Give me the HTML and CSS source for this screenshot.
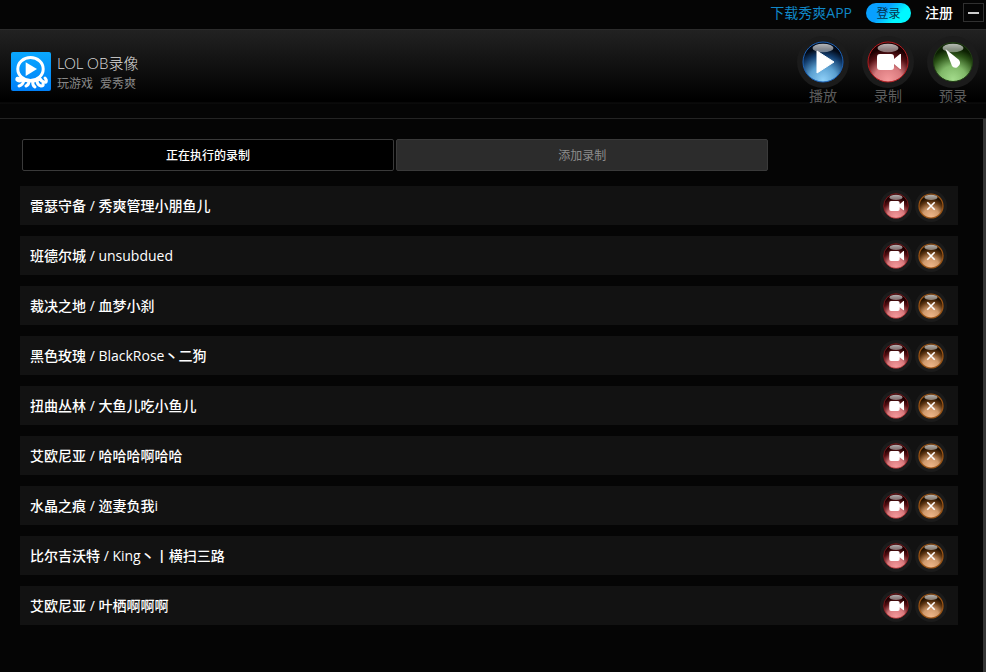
FILE: index.html
```html
<!DOCTYPE html>
<html lang="zh-CN">
<head>
<meta charset="utf-8">
<title>LOL OB录像</title>
<link rel="stylesheet" href="styles.css">
</head>
<body>
<svg class="defs" aria-hidden="true">
  <defs>
    <radialGradient id="blue" cx=".5" cy=".95" r=".92"><stop offset="0" stop-color="#8fd0f8"/><stop offset=".38" stop-color="#5a9fd0"/><stop offset=".68" stop-color="#123c6c"/><stop offset=".86" stop-color="#020a18"/></radialGradient>
    <radialGradient id="red" cx=".5" cy=".95" r=".92"><stop offset="0" stop-color="#f59a9c"/><stop offset=".38" stop-color="#d87a7e"/><stop offset=".68" stop-color="#541014"/><stop offset=".86" stop-color="#1c0002"/></radialGradient>
    <radialGradient id="green" cx=".5" cy=".95" r=".92"><stop offset="0" stop-color="#a4dc8c"/><stop offset=".38" stop-color="#80b868"/><stop offset=".68" stop-color="#2c5418"/><stop offset=".86" stop-color="#0c2002"/></radialGradient>
    <radialGradient id="orange" cx=".5" cy=".95" r=".92"><stop offset="0" stop-color="#f0b88c"/><stop offset=".38" stop-color="#d09a6c"/><stop offset=".68" stop-color="#5c3410"/><stop offset=".86" stop-color="#201000"/></radialGradient>
    <linearGradient id="shine" x1="0" y1="0" x2="0" y2="1"><stop offset="0" stop-color="#fff" stop-opacity=".7"/><stop offset="1" stop-color="#fff" stop-opacity=".4"/></linearGradient>
    <symbol id="rec" viewBox="0 0 52 52">
      <circle cx="26" cy="26" r="26" fill="#1b1b1b"/>
      <circle cx="26" cy="26" r="20" fill="url(#red)" stroke="#b01c20"/>
      <ellipse cx="26" cy="12" rx="10.5" ry="4.3" fill="url(#shine)"/>
      <path d="M18 18h11q3 0 3 3v2l6-5h1v15h-1l-6-5v3q0 3-3 3H18q-3 0-3-3V21q0-3 3-3z" fill="#fff"/>
    </symbol>
    <symbol id="close" viewBox="0 0 52 52">
      <circle cx="26" cy="26" r="26" fill="#1b1b1b"/>
      <circle cx="26" cy="26" r="19.5" fill="url(#orange)" stroke="#9c5414" stroke-width="2"/>
      <ellipse cx="26" cy="12" rx="10.5" ry="4.3" fill="url(#shine)"/>
      <path d="M20 20l12 12M32 20L20 32" stroke="#fff" stroke-width="2.6"/>
    </symbol>
  </defs>
</svg>
<nav class="topbar">
  <a class="download" href="#">下载秀爽APP</a>
  <button class="login" type="button">登录</button>
  <a class="register" href="#">注册</a>
  <button class="minimize" type="button" aria-label="最小化"><span></span></button>
</nav>
<header class="header">
  <div class="brand">
    <svg class="logo" viewBox="0 0 40 39" aria-hidden="true">
      <defs><linearGradient id="lg" x1="0" y1="0" x2="0" y2="1"><stop offset="0" stop-color="#0aa8ff"/><stop offset="1" stop-color="#0080f8"/></linearGradient></defs>
      <rect width="40" height="39" rx="2" fill="url(#lg)"/>
      <ellipse cx="19.5" cy="17" rx="12.7" ry="11.5" fill="none" stroke="#fff" stroke-width="3"/>
      <path d="M14.700 10.300v13.700L26 17z" fill="#fff"/>
      <path d="M9 24q10 7 20 0l2 4q-11 5-22 0z" fill="#fff"/>
      <g fill="none" stroke="#fff" stroke-width="3" stroke-linecap="round" stroke-linejoin="round">
        <path d="M10 27q-5-2-4 1 2 2 5 0"/><path d="M13 28q-1 5-5 6"/><path d="M18 29q0 4-3 5"/><path d="M22 29q-1 4 2 6"/><path d="M26 28q0 5 4 6 3 0 2-2"/><path d="M29 27q3 4 6 3 1-2-1-4"/>
      </g>
    </svg>
    <div>
      <div class="name">LOL OB录像</div>
      <div class="slogan"><span>玩游戏</span><span>爱秀爽</span></div>
    </div>
  </div>
  <div class="actions">
    <button class="action" type="button">
      <svg viewBox="0 0 52 52" aria-hidden="true"><circle cx="26" cy="26" r="26" fill="#1b1b1b"/><circle cx="26" cy="26" r="20" fill="url(#blue)" stroke="#1c60b4"/><ellipse cx="26" cy="12" rx="10.5" ry="4.3" fill="url(#shine)"/><path d="M20 15v22L37 26z" fill="#fff" stroke="#fff" stroke-linejoin="round"/></svg>
      <span>播放</span>
    </button>
    <button class="action" type="button"><svg aria-hidden="true"><use href="#rec"/></svg><span>录制</span></button>
    <button class="action" type="button">
      <svg viewBox="0 0 52 52" aria-hidden="true"><circle cx="26" cy="26" r="26" fill="#1b1b1b"/><circle cx="26" cy="26" r="19.5" fill="url(#green)" stroke="#203c14"/><ellipse cx="26" cy="12" rx="10.5" ry="4.3" fill="url(#shine)"/><path d="M18.500 13L31.500 23.500Q34 26 32.500 29L30 31.500Q26.500 32.500 25 30z" fill="#fff"/></svg>
      <span>预录</span>
    </button>
  </div>
</header>
<main class="content">
  <div class="tabs">
    <button class="tab active" type="button">正在执行的录制</button>
    <button class="tab" type="button">添加录制</button>
  </div>
  <ul class="list">
    <li><span>雷瑟守备 / 秀爽管理小朋鱼儿</span><button type="button" aria-label="录制"><svg><use href="#rec"/></svg></button><button type="button" aria-label="关闭"><svg><use href="#close"/></svg></button></li>
    <li><span>班德尔城 / unsubdued</span><button type="button" aria-label="录制"><svg><use href="#rec"/></svg></button><button type="button" aria-label="关闭"><svg><use href="#close"/></svg></button></li>
    <li><span>裁决之地 / 血梦小刹</span><button type="button" aria-label="录制"><svg><use href="#rec"/></svg></button><button type="button" aria-label="关闭"><svg><use href="#close"/></svg></button></li>
    <li><span>黑色玫瑰 / BlackRose丶二狗</span><button type="button" aria-label="录制"><svg><use href="#rec"/></svg></button><button type="button" aria-label="关闭"><svg><use href="#close"/></svg></button></li>
    <li><span>扭曲丛林 / 大鱼儿吃小鱼儿</span><button type="button" aria-label="录制"><svg><use href="#rec"/></svg></button><button type="button" aria-label="关闭"><svg><use href="#close"/></svg></button></li>
    <li><span>艾欧尼亚 / 哈哈哈啊哈哈</span><button type="button" aria-label="录制"><svg><use href="#rec"/></svg></button><button type="button" aria-label="关闭"><svg><use href="#close"/></svg></button></li>
    <li><span>水晶之痕 / 迩妻负我i</span><button type="button" aria-label="录制"><svg><use href="#rec"/></svg></button><button type="button" aria-label="关闭"><svg><use href="#close"/></svg></button></li>
    <li><span>比尔吉沃特 / King丶丨横扫三路</span><button type="button" aria-label="录制"><svg><use href="#rec"/></svg></button><button type="button" aria-label="关闭"><svg><use href="#close"/></svg></button></li>
    <li><span>艾欧尼亚 / 叶栖啊啊啊</span><button type="button" aria-label="录制"><svg><use href="#rec"/></svg></button><button type="button" aria-label="关闭"><svg><use href="#close"/></svg></button></li>
  </ul>
</main>
</body>
</html>
```
FILE: styles.css
```css
* { box-sizing: border-box; }
body {
  margin: 0;
  min-height: 100vh;
  display: flex;
  flex-direction: column;
  background: #050505;
  color: #fff;
  font: 14px/20px "Open Sans", "Noto Sans CJK SC", sans-serif;
}
button { font: inherit; color: inherit; padding: 0; border: 0; background: none; cursor: pointer; }
a { text-decoration: none; }
svg { display: block; }
.defs { position: absolute; width: 0; height: 0; }

.topbar {
  display: flex;
  justify-content: flex-end;
  align-items: center;
  height: 30px;
  padding: 0 2px 4px 0;
  border-bottom: 1px solid #2c2c2c;
}
.download { color: #1088c8; margin-right: 14px; }
.login {
  width: 45px;
  height: 20px;
  margin-right: 14px;
  padding-top: 1px;
  border-radius: 10px;
  background: linear-gradient(135deg, #08a0ff 40%, #00f8ff 70%);
  color: #06344c;
  font-size: 12px;
  line-height: 20px;
}
.register { color: #fff; font-weight: 500; margin-right: 10px; }
.minimize {
  display: flex;
  align-items: center;
  justify-content: center;
  width: 21px;
  height: 19px;
  border: 1px solid #303030;
}
.minimize span { width: 11px; height: 2px; background: #ccc; }

.header {
  display: flex;
  justify-content: space-between;
  align-items: flex-start;
  height: 89px;
  padding: 6px 7px 0 11px;
  border-bottom: 1px solid #242424;
  background: linear-gradient(#222, #000 70px, #000 72px, #101010 73px, #050505 74px);
}
.brand { display: flex; gap: 6px; padding-top: 16px; }
.logo { width: 40px; height: 39px; }
.name { color: #ddd; font: 300 15px/22px Lato, "Noto Sans CJK SC", sans-serif; }
.slogan { display: flex; gap: 7px; color: #888; font-size: 12px; line-height: 20px; }
.actions { display: flex; gap: 13px; }
.action { width: 52px; color: #5c5c5c; text-align: center; }
.action svg { width: 52px; height: 52px; }
.action span { display: block; line-height: 16px; }

.content {
  flex: 1;
  padding: 20px 25px 20px 20px;
  border-right: 3px solid #353535;
}
.tabs { display: grid; grid-template-columns: 1fr 1fr; gap: 2px; width: 80%; padding: 0 2px; }
.tab {
  height: 32px;
  padding-top: 2px;
  border: 1px solid #3a3a3a;
  border-radius: 2px;
  background: #2c2c2c;
  color: #8c8c8c;
  font-size: 12px;
}
.tab.active { background: #000; color: #fff; font-weight: 500; }
.list { display: grid; gap: 11px; margin: 15px 0 0; padding: 0; list-style: none; }
.list li {
  display: flex;
  align-items: center;
  gap: 3px;
  height: 39px;
  padding: 0 11px 0 10px;
  background: #121212;
  font-weight: 500;
}
.list li span { flex: 1; }
.list svg { width: 32px; height: 32px; }
```
